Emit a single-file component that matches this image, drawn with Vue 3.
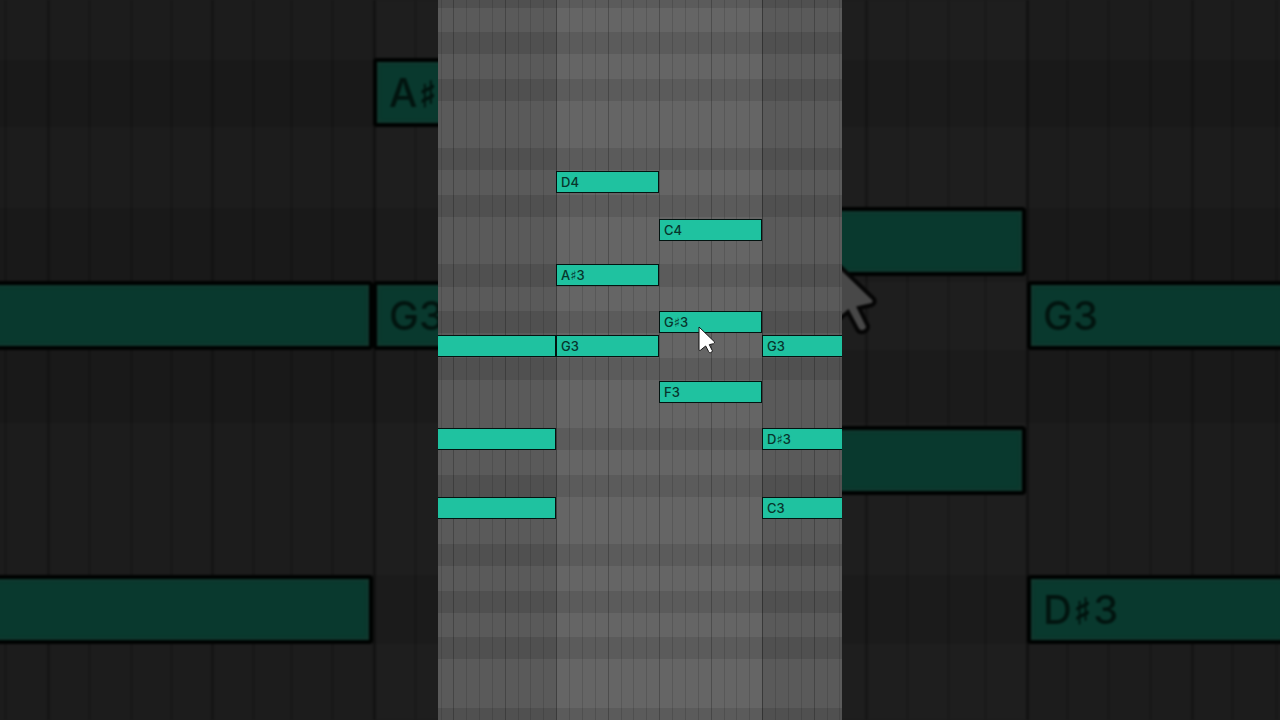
<script setup>
// x values are measured from the horizontal centre of the roll
const at = (n) => ({
  left: `calc(50% + ${n.x}px)`,
  top: `${n.y}px`,
  width: `${n.w}px`,
})

const expand = (list) => {
  let black = list.first
  return list.heights.map((h) => {
    const row = { h, black }
    black = !black
    return row
  })
}

const rows = expand({
  first: true,
  heights: [8, 24, 22, 25, 22, 47, 22, 25, 22, 47, 23, 24, 22, 25, 22, 48, 22, 25, 22, 47, 22, 25, 22, 24, 22, 49, 12],
})
const farRows = expand({
  first: false,
  heights: [60, 67, 81, 74, 68, 73, 152, 69, 76],
})

const beats = [13, 13, 13, 13, 13, 12, 13, 13]
const columns = [
  { w: 3, kind: 'none' },
  { w: 12, kind: 'sub' },
  ...Array.from({ length: 31 }, (_, i) => ({
    w: beats[i % 8],
    kind: i % 8 === 0 && i ? (i === 8 || i === 24 ? 'bar' : 'beat') : i % 4 ? 'sub' : 'beat',
  })),
]

const farLines = [
  [-635, 'sub'], [-592, 'beat'], [-551, 'sub'], [-509, 'sub'], [-469, 'sub'],
  [-428, 'beat'], [-387, 'sub'], [-349, 'sub'], [-308, 'sub'], [-266, 'bar'],
  [-225, 'sub'], [226, 'beat'], [267, 'sub'], [308, 'sub'], [345, 'sub'],
  [387, 'bar'], [427, 'sub'], [468, 'sub'], [510, 'sub'], [552, 'beat'],
  [592, 'sub'], [636, 'sub'],
].map(([x, kind]) => ({ x, kind }))

const notes = [
  { name: 'D4', x: -84, y: 171, w: 103 },
  { name: 'C4', x: 19, y: 219, w: 103 },
  { name: 'A♯3', x: -84, y: 264, w: 103 },
  { name: 'G♯3', x: 19, y: 311, w: 103 },
  { name: '', x: -212, y: 335, w: 128 },
  { name: 'G3', x: -84, y: 335, w: 103 },
  { name: 'G3', x: 122, y: 335, w: 103 },
  { name: 'F3', x: 19, y: 381, w: 103 },
  { name: '', x: -212, y: 428, w: 128 },
  { name: 'D♯3', x: 122, y: 428, w: 103 },
  { name: '', x: -212, y: 497, w: 128 },
  { name: 'C3', x: 122, y: 497, w: 103 },
]

const farNotes = [
  { name: 'A♯3', x: -267, y: 58, w: 326 },
  { name: '', x: 59, y: 207, w: 327 },
  { name: '', x: -672, y: 281, w: 405 },
  { name: 'G3', x: -267, y: 281, w: 326 },
  { name: 'G3', x: 387, y: 281, w: 326 },
  { name: '', x: 59, y: 426, w: 327 },
  { name: '', x: -672, y: 575, w: 405 },
  { name: 'D♯3', x: 387, y: 575, w: 326 },
]

const pointer = 'M3 3 L49 47 Q51 51 47 53 L34 56 L43 74 Q43 79 38 80 Q34 81 32 77 L23 60 L7 73 Q3 75 3 70 Z'
</script>

<template>
  <main class="stage">
    <div class="roll far" aria-hidden="true">
      <div class="rows">
        <div v-for="(r, i) in farRows" :key="i" class="row" :class="{ black: r.black }" :style="{ height: r.h + 'px' }"></div>
      </div>
      <div class="focus"></div>
      <i v-for="l in farLines" :key="l.x" class="line" :class="l.kind" :style="{ left: `calc(50% + ${l.x}px)` }"></i>
      <div v-for="(n, i) in farNotes" :key="i" class="note" :style="at(n)">
        <span v-for="c in n.name" :key="c" :class="{ sharp: c === '♯' }">{{ c }}</span>
      </div>
      <svg class="pointer" viewBox="0 0 54 84"><path :d="pointer" /></svg>
    </div>

    <section class="roll near" aria-label="Piano roll">
      <div class="rows">
        <div v-for="(r, i) in rows" :key="i" class="row" :class="{ black: r.black }" :style="{ height: r.h + 'px' }"></div>
      </div>
      <div class="focus"></div>
      <div class="columns">
        <i v-for="(c, i) in columns" :key="i" class="column" :class="c.kind" :style="{ width: c.w + 'px' }"></i>
      </div>
      <div v-for="(n, i) in notes" :key="i" class="note" :style="at(n)">
        <span v-for="c in n.name" :key="c" :class="{ sharp: c === '♯' }">{{ c }}</span>
      </div>
      <svg class="pointer" viewBox="0 0 54 84" aria-hidden="true"><path :d="pointer" /></svg>
    </section>
  </main>
</template>

<style>
body {
  margin: 0;
  background: #1b1b1b;
}
</style>

<style scoped>
.stage {
  position: relative;
  display: flex;
  justify-content: center;
  height: 100vh;
  overflow: hidden;
  font-family: Inter, "DejaVu Sans", sans-serif;
}
.roll {
  overflow: hidden;
}
.rows {
  display: flex;
  flex-direction: column;
  height: 100%;
}
.row {
  flex: none;
}
.row:last-child {
  flex: 1 0 auto;
}
.focus {
  position: absolute;
  top: 0;
  bottom: 0;
}
.note {
  position: absolute;
  box-sizing: border-box;
  white-space: nowrap;
}
.sharp {
  font-family: "DejaVu Sans", sans-serif;
  font-weight: 700;
}
.pointer {
  position: absolute;
}

/* enlarged, dimmed roll behind the panel */
.far {
  position: absolute;
  inset: 0 -8px;
  filter: blur(1px);
}
.far .row {
  background: #1c1c1c;
}
.far .row.black {
  background: #191919;
}
.far .focus {
  left: calc(50% - 266px);
  width: 653px;
  background: rgba(255, 255, 255, 0.012);
}
.line {
  position: absolute;
  top: 0;
  bottom: 0;
  width: 3px;
  margin-left: -1px;
  background: rgba(0, 0, 0, 0.12);
}
.line.beat {
  background: rgba(0, 0, 0, 0.24);
}
.line.bar {
  background: rgba(0, 0, 0, 0.34);
}
.far .note {
  height: 69px;
  padding-left: 12px;
  border: 4px solid #000201;
  border-radius: 4px;
  background: #09392e;
  box-shadow: inset 0 0 4px 1px #18382f;
  color: #02140f;
  font-size: 40px;
  font-weight: 500;
  line-height: 62px;
}
.far .sharp {
  padding: 0 2px;
  font-size: 36px;
  -webkit-text-stroke: 1px #02140f;
}
.far .pointer {
  left: calc(50% + 185px);
  top: 252px;
  width: 54px;
  height: 84px;
}
.far .pointer path {
  fill: #484848;
  stroke: #050505;
  stroke-width: 4;
}

/* sharp panel */
.near {
  position: relative;
  height: 100%;
  width: 404px;
  max-width: 100%;
}
.near .row {
  background: #5a5a5a;
}
.near .row.black {
  background: #505050;
}
.near .focus {
  left: calc(50% - 84px);
  width: 206px;
  background: rgba(255, 255, 255, 0.065);
}
.columns {
  position: absolute;
  inset: 0;
  display: flex;
}
.column {
  flex: none;
  box-sizing: border-box;
  border-left: 1px solid rgba(0, 0, 0, 0.12);
}
.column.none {
  border-left: 0;
}
.column.beat {
  border-left-color: rgba(0, 0, 0, 0.23);
}
.column.bar {
  border-left-color: rgba(0, 0, 0, 0.36);
}
.near .note {
  height: 22px;
  padding-left: 4px;
  border: 1px solid #021310;
  background: #1fc2a0;
  color: #07352c;
  font-size: 13px;
  font-weight: 500;
  line-height: 20px;
}
.near .sharp {
  font-size: 13px;
}
.near .pointer {
  left: calc(50% + 58px);
  top: 326px;
  width: 18px;
  height: 28px;
}
.near .pointer path {
  fill: #ffffff;
  stroke: #161616;
  stroke-width: 3;
}
</style>
